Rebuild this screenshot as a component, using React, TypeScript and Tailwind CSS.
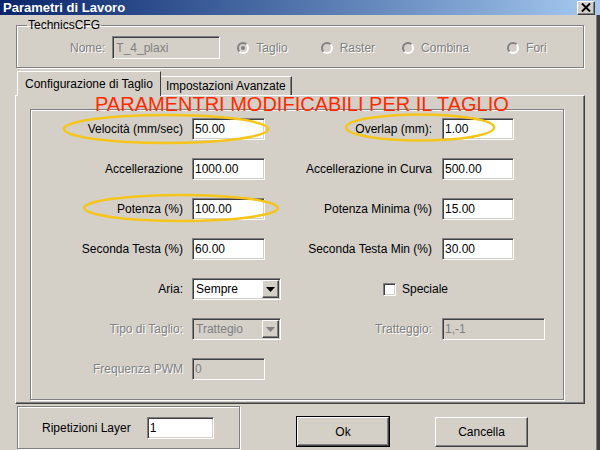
import React from "react";

const sunken =
  "border border-t-[#808080] border-l-[#808080] border-b-white border-r-white shadow-[inset_1px_1px_0_#404040,inset_-1px_-1px_0_#d4d0c8]";
const raised =
  "border border-t-white border-l-white border-b-[#404040] border-r-[#404040] shadow-[inset_-1px_-1px_0_#808080]";
const etched = "border border-[#808080] shadow-[inset_1px_1px_0_#fff,1px_1px_0_#fff]";
const grayText = "text-[#808080] [text-shadow:1px_1px_0_#fff]";

function Field({ value, w, disabled }: { value: string; w: string; disabled?: boolean }) {
  return (
    <div
      className={`${sunken} ${w} h-[22px] flex items-center px-[2px] ${
        disabled ? "bg-[#d4d0c8] text-[#808080]" : "bg-white text-black"
      }`}
    >
      {value}
    </div>
  );
}

function Combo({ value, disabled }: { value: string; disabled?: boolean }) {
  return (
    <div
      className={`${sunken} w-[89px] h-[22px] flex items-center pl-[3px] pr-[1px] ${
        disabled ? "bg-[#d4d0c8] text-[#808080]" : "bg-white text-black"
      }`}
    >
      <span className="flex-1">{value}</span>
      <span className={`${raised} bg-[#d4d0c8] w-[17px] h-[18px] flex items-center justify-center`}>
        <svg width="9" height="5" viewBox="0 0 9 5">
          <path d="M0 0h9L4.5 5z" fill={disabled ? "#808080" : "#000"} />
        </svg>
      </span>
    </div>
  );
}

function Label({ children, w, disabled }: { children: React.ReactNode; w: string; disabled?: boolean }) {
  return <span className={`${w} text-right ${disabled ? grayText : "text-black"}`}>{children}</span>;
}

function Radio({ label, checked }: { label: string; checked?: boolean }) {
  return (
    <div className="flex items-center gap-[7px]">
      <span className="w-[12px] h-[12px] rounded-full border-2 border-t-[#808080] border-l-[#808080] border-b-white border-r-white bg-[#d4d0c8] flex items-center justify-center">
        {checked && <span className="w-[4px] h-[4px] rounded-full bg-[#808080]" />}
      </span>
      <span className={grayText}>{label}</span>
    </div>
  );
}

function Row({ children }: { children: React.ReactNode }) {
  return <div className="flex items-center h-[22px]">{children}</div>;
}

export default function App() {
  return (
    <div
      className="relative w-[600px] h-[450px] overflow-hidden bg-[#d4d0c8] shadow-[inset_-3px_0_0_#404040,inset_-4px_0_0_#808080] text-[12px] leading-none"
      style={{ fontFamily: '"Liberation Sans", Arial, sans-serif' }}
    >
      {/* title bar */}
      <div className="h-[15px] flex items-center justify-between bg-gradient-to-r from-[#0a246a] to-[#a6caf0] pl-[3px] pr-[5px]">
        <span className="text-white font-bold text-[13px]">Parametri di Lavoro</span>
        <span className={`${raised} bg-[#d4d0c8] w-[18px] h-[14px] flex items-center justify-center`}>
          <svg width="10" height="9" viewBox="0 0 10 9">
            <path d="M1 0.5l8 8M9 0.5l-8 8" stroke="#000" strokeWidth="2" />
          </svg>
        </span>
      </div>

      {/* TechnicsCFG */}
      <fieldset className={`${etched} ml-[16px] w-[568px] h-[49px] mt-[4px] px-[10px]`}>
        <legend className="px-[1px] text-black">TechnicsCFG</legend>
        <div className="flex items-center h-[23px] mt-[5px]">
          <span className={`${grayText} ml-[43px]`}>Nome:</span>
          <div className={`${sunken} w-[108px] h-[23px] ml-[7px] flex items-center px-[3px] text-[#808080] bg-[#d4d0c8]`}>
            T_4_plaxi
          </div>
          <div className="ml-[17px]">
            <Radio label="Taglio" checked />
          </div>
          <div className="ml-[33px]">
            <Radio label="Raster" />
          </div>
          <div className="ml-[27px]">
            <Radio label="Combina" />
          </div>
          <div className="ml-[38px]">
            <Radio label="Fori" />
          </div>
        </div>
      </fieldset>

      {/* tabs */}
      <div className="flex items-end ml-[17px] mt-[2px] h-[25px]">
        <div className="relative z-10 h-[25px] px-[7px] flex items-center bg-[#d4d0c8] border-t border-l border-t-white border-l-white border-r border-r-[#404040] -mb-px">
          Configurazione di Taglio
        </div>
        <div className="h-[19px] px-[5px] flex items-center border-t border-t-white border-r border-r-[#404040] shadow-[inset_-1px_0_0_#808080]">
          Impostazioni Avanzate
        </div>
      </div>
      <div className={`${raised} ml-[15px] w-[570px] h-[309px] pt-[13px] pl-[14px]`}>
        <div className={`${etched} w-[534px] h-[291px] pt-[8px] flex flex-col gap-[18px]`}>
          <Row>
            <Label w="w-[152px]">Velocità (mm/sec)</Label>
            <div className="ml-[9px] w-[89px]">
              <Field value="50.00" w="w-[73px]" />
            </div>
            <Label w="w-[151px]">Overlap (mm):</Label>
            <div className="ml-[10px]">
              <Field value="1.00" w="w-[72px]" />
            </div>
          </Row>
          <Row>
            <Label w="w-[152px]">Accellerazione</Label>
            <div className="ml-[9px] w-[89px]">
              <Field value="1000.00" w="w-[73px]" />
            </div>
            <Label w="w-[151px]">Accellerazione in Curva</Label>
            <div className="ml-[10px]">
              <Field value="500.00" w="w-[72px]" />
            </div>
          </Row>
          <Row>
            <Label w="w-[152px]">Potenza (%)</Label>
            <div className="ml-[9px] w-[89px]">
              <Field value="100.00" w="w-[73px]" />
            </div>
            <Label w="w-[151px]">Potenza Minima (%)</Label>
            <div className="ml-[10px]">
              <Field value="15.00" w="w-[72px]" />
            </div>
          </Row>
          <Row>
            <Label w="w-[152px]">Seconda Testa (%)</Label>
            <div className="ml-[9px] w-[89px]">
              <Field value="60.00" w="w-[73px]" />
            </div>
            <Label w="w-[151px]">Seconda Testa Min (%)</Label>
            <div className="ml-[10px]">
              <Field value="30.00" w="w-[72px]" />
            </div>
          </Row>
          <Row>
            <Label w="w-[152px]">Aria:</Label>
            <div className="ml-[9px] w-[89px]">
              <Combo value="Sempre" />
            </div>
            <div className="ml-[102px] flex items-center gap-[6px]">
              <span className={`${sunken} w-[13px] h-[13px] bg-white`} />
              <span>Speciale</span>
            </div>
          </Row>
          <Row>
            <Label w="w-[152px]" disabled>
              Tipo di Taglio:
            </Label>
            <div className="ml-[9px] w-[89px]">
              <Combo value="Trattegio" disabled />
            </div>
            <Label w="w-[151px]" disabled>
              Tratteggio:
            </Label>
            <div className="ml-[10px]">
              <Field value="1,-1" w="w-[103px]" disabled />
            </div>
          </Row>
          <Row>
            <Label w="w-[152px]" disabled>
              Frequenza PWM
            </Label>
            <div className="ml-[9px]">
              <Field value="0" w="w-[73px]" disabled />
            </div>
          </Row>
        </div>
      </div>

      {/* bottom */}
      <div className="flex items-start mt-[2px] ml-[17px]">
        <div className={`${etched} w-[223px] h-[43px] flex items-center`}>
          <span className="ml-[24px]">Ripetizioni Layer</span>
          <div className="ml-[16px]">
            <Field value="1" w="w-[67px]" />
          </div>
        </div>
        <div className="ml-[56px] mt-[10px] border border-black">
          <div className={`${raised} w-[92px] h-[29px] flex items-center justify-center`}>Ok</div>
        </div>
        <div className={`${raised} ml-[45px] mt-[11px] w-[93px] h-[30px] flex items-center justify-center`}>
          Cancella
        </div>
      </div>

      {/* annotations */}
      <div className="absolute left-[95px] top-[94px] text-[#ff2a00] text-[20px] leading-none whitespace-nowrap">
        PARAMENTRI MODIFICABILI PER IL TAGLIO
      </div>
      <svg className="absolute left-0 top-0 pointer-events-none" width="600" height="450">
        <g fill="none" stroke="#f6c51c" strokeWidth="2.5">
          <ellipse cx="166" cy="129" rx="102" ry="14" />
          <ellipse cx="181" cy="208" rx="97" ry="13" />
          <ellipse cx="420" cy="127.5" rx="74" ry="13" />
        </g>
      </svg>
    </div>
  );
}
